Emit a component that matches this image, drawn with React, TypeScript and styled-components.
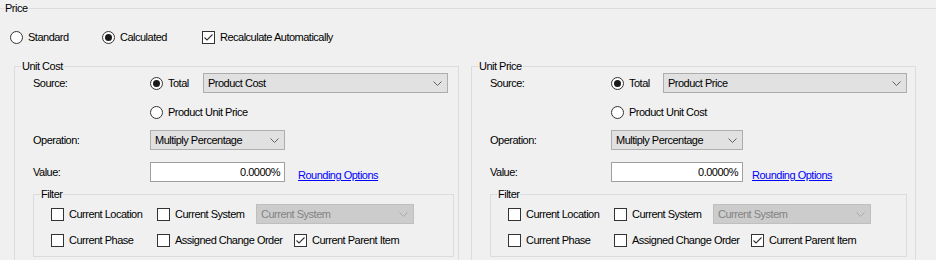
import React from 'react';
import styled, { createGlobalStyle } from 'styled-components';

const GlobalStyle = createGlobalStyle`
  html, body {
    margin: 0;
    padding: 0;
    background: #f0f0f0;
    overflow: hidden;
  }
  body {
    font-family: "Liberation Sans", Arial, sans-serif;
    font-size: 11px;
    letter-spacing: -0.5px;
    color: #000;
  }
`;

const Page = styled.div`
  width: 936px;
  height: 260px;
  padding-top: 2px;
  box-sizing: border-box;
  overflow: hidden;
`;

const GroupBox = styled.fieldset<{ $width?: number }>`
  margin: 0;
  padding: 0;
  min-width: 0;
  box-sizing: border-box;
  border: 1px solid #dcdcdc;
  ${(p) => (p.$width ? `width: ${p.$width}px; flex: none;` : '')}
`;

const OuterGroup = styled(GroupBox)`
  border-width: 1px 0 0 0;
  width: 100%;
`;

const Legend = styled.legend<{ $indent: number }>`
  margin-left: ${(p) => p.$indent}px;
  padding: 0 1px;
  line-height: 13px;
`;

const OptionBar = styled.div`
  display: flex;
  align-items: center;
  height: 13px;
  margin-top: 16px;
  padding-left: 10px;
`;

const Panels = styled.div`
  display: flex;
  gap: 12px;
  margin-top: 16px;
  padding-left: 14px;
`;

const PanelBody = styled.div`
  padding: 0 0 20px 18px;
`;

const Row = styled.div<{ $top?: number }>`
  display: flex;
  align-items: center;
  height: 20px;
  margin-top: ${(p) => p.$top ?? 0}px;
`;

const FieldLabel = styled.div<{ $width: number }>`
  width: ${(p) => p.$width}px;
  flex: none;
  line-height: 20px;
`;

const Choice = styled.label<{ $width?: number }>`
  display: flex;
  align-items: center;
  flex: none;
  gap: 5px;
  white-space: nowrap;
  line-height: 13px;
  ${(p) => (p.$width ? `width: ${p.$width}px;` : '')}
`;

const RadioCircle = styled.span<{ $on?: boolean }>`
  position: relative;
  width: 13px;
  height: 13px;
  flex: none;
  box-sizing: border-box;
  border: 1px solid #333;
  border-radius: 50%;
  background: #fff;

  &::after {
    content: '';
    display: ${(p) => (p.$on ? 'block' : 'none')};
    position: absolute;
    left: 2px;
    top: 2px;
    width: 7px;
    height: 7px;
    border-radius: 50%;
    background: #1a1a1a;
  }
`;

const CheckSquare = styled.span`
  display: flex;
  width: 13px;
  height: 13px;
  flex: none;
  box-sizing: border-box;
  border: 1px solid #333;
  background: #fff;
`;

const Combo = styled.div<{ $width: number; $disabled?: boolean }>`
  display: flex;
  align-items: center;
  justify-content: space-between;
  width: ${(p) => p.$width}px;
  height: 20px;
  flex: none;
  box-sizing: border-box;
  padding: 0 5px 0 4px;
  border: 1px solid ${(p) => (p.$disabled ? '#bfbfbf' : '#adadad')};
  background: ${(p) => (p.$disabled ? '#cccccc' : '#e1e1e1')};
  color: ${(p) => (p.$disabled ? '#838383' : '#000')};
  white-space: nowrap;
`;

const TextBox = styled.div<{ $width: number }>`
  width: ${(p) => p.$width}px;
  height: 20px;
  flex: none;
  box-sizing: border-box;
  padding: 0 4px;
  border: 1px solid #a0a0a0;
  background: #fff;
  text-align: right;
  line-height: 18px;
`;

const Link = styled.a<{ $gap: number }>`
  margin-left: ${(p) => p.$gap}px;
  align-self: flex-end;
  line-height: 13px;
  color: #0000ff;
  text-decoration: underline;
  white-space: nowrap;
  cursor: pointer;
`;

const FilterBody = styled.div`
  padding: 3px 0 6px 17px;
`;

const FilterGroup = styled(GroupBox)`
  margin-top: 6px;
`;

const Chevron = ({ light }: { light?: boolean }) => (
  <svg width="9" height="5" viewBox="0 0 9 5">
    <path d="M0.5 0.5 L4.5 4.5 L8.5 0.5" fill="none" stroke={light ? '#a8a8a8' : '#606060'} strokeWidth="1" />
  </svg>
);

const Radio = ({ label, on, width }: { label: string; on?: boolean; width?: number }) => (
  <Choice $width={width}>
    <RadioCircle $on={on} />
    {label}
  </Choice>
);

const Check = ({ label, on, width }: { label: string; on?: boolean; width?: number }) => (
  <Choice $width={width}>
    <CheckSquare>
      {on && (
        <svg width="11" height="11" viewBox="0 0 11 11">
          <path d="M1.5 5.5 L4 8 L9.5 2.5" fill="none" stroke="#333" strokeWidth="1.1" />
        </svg>
      )}
    </CheckSquare>
    {label}
  </Choice>
);

type PanelConfig = {
  title: string;
  source: string;
  altSource: string;
  groupWidth: number;
  labelWidth: number;
  totalWidth: number;
  comboWidth: number;
  opWidth: number;
  linkGap: number;
  filterWidth: number;
};

const panels: PanelConfig[] = [
  {
    title: 'Unit Cost',
    source: 'Product Cost',
    altSource: 'Product Unit Price',
    groupWidth: 445,
    labelWidth: 117,
    totalWidth: 53,
    comboWidth: 245,
    opWidth: 135,
    linkGap: 13,
    filterWidth: 421,
  },
  {
    title: 'Unit Price',
    source: 'Product Price',
    altSource: 'Product Unit Cost',
    groupWidth: 445,
    labelWidth: 121,
    totalWidth: 52,
    comboWidth: 244,
    opWidth: 132,
    linkGap: 9,
    filterWidth: 417,
  },
];

const CalcPanel = ({ cfg }: { cfg: PanelConfig }) => (
  <GroupBox $width={cfg.groupWidth}>
    <Legend $indent={6}>{cfg.title}</Legend>
    <PanelBody>
      <Row>
        <FieldLabel $width={cfg.labelWidth}>Source:</FieldLabel>
        <Radio label="Total" on width={cfg.totalWidth} />
        <Combo $width={cfg.comboWidth}>
          {cfg.source}
          <Chevron />
        </Combo>
      </Row>
      <Row $top={9}>
        <FieldLabel $width={cfg.labelWidth} />
        <Radio label={cfg.altSource} />
      </Row>
      <Row $top={8}>
        <FieldLabel $width={cfg.labelWidth}>Operation:</FieldLabel>
        <Combo $width={cfg.opWidth}>
          Multiply Percentage
          <Chevron />
        </Combo>
      </Row>
      <Row $top={12}>
        <FieldLabel $width={cfg.labelWidth}>Value:</FieldLabel>
        <TextBox $width={cfg.opWidth}>0.0000%</TextBox>
        <Link $gap={cfg.linkGap}>Rounding Options</Link>
      </Row>
      <FilterGroup $width={cfg.filterWidth}>
        <Legend $indent={6}>Filter</Legend>
        <FilterBody>
          <Row>
            <Check label="Current Location" width={106} />
            <Check label="Current System" width={99} />
            <Combo $width={158} $disabled>
              Current System
              <Chevron light />
            </Combo>
          </Row>
          <Row $top={6}>
            <Check label="Current Phase" width={106} />
            <Check label="Assigned Change Order" width={137} />
            <Check label="Current Parent Item" on />
          </Row>
        </FilterBody>
      </FilterGroup>
    </PanelBody>
  </GroupBox>
);

export default function App() {
  return (
    <>
      <GlobalStyle />
      <Page>
        <OuterGroup>
          <Legend $indent={4}>Price</Legend>
          <OptionBar>
            <Radio label="Standard" width={92} />
            <Radio label="Calculated" on width={100} />
            <Check label="Recalculate Automatically" on />
          </OptionBar>
          <Panels>
            {panels.map((p) => (
              <CalcPanel key={p.title} cfg={p} />
            ))}
          </Panels>
        </OuterGroup>
      </Page>
    </>
  );
}
